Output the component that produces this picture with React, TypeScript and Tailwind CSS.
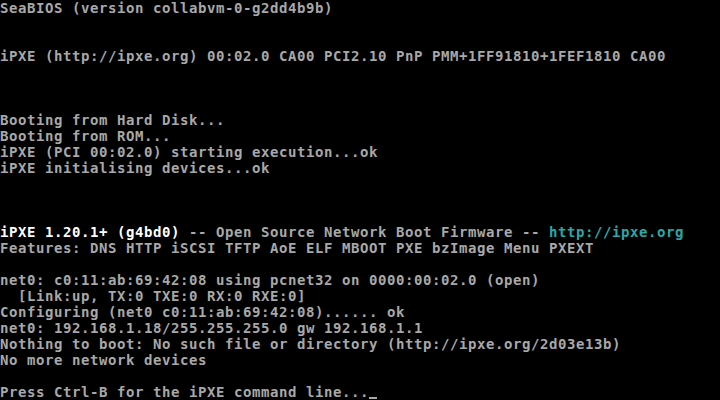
import React from "react";

type Seg = { t: string; c?: "w" | "c" };
const G = (t: string): Seg[] => [{ t }];

const rows: Seg[][] = [
  G("SeaBIOS (version collabvm-0-g2dd4b9b)"),
  G(""),
  G(""),
  G("iPXE (http://ipxe.org) 00:02.0 CA00 PCI2.10 PnP PMM+1FF91810+1FEF1810 CA00"),
  G(""),
  G(""),
  G(""),
  G("Booting from Hard Disk..."),
  G("Booting from ROM..."),
  G("iPXE (PCI 00:02.0) starting execution...ok"),
  G("iPXE initialising devices...ok"),
  G(""),
  G(""),
  G(""),
  [
    { t: "iPXE 1.20.1+ (g4bd0)", c: "w" },
    { t: " -- Open Source Network Boot Firmware -- " },
    { t: "http://ipxe.org", c: "c" },
  ],
  G("Features: DNS HTTP iSCSI TFTP AoE ELF MBOOT PXE bzImage Menu PXEXT"),
  G(""),
  G("net0: c0:11:ab:69:42:08 using pcnet32 on 0000:00:02.0 (open)"),
  G("  [Link:up, TX:0 TXE:0 RX:0 RXE:0]"),
  G("Configuring (net0 c0:11:ab:69:42:08)...... ok"),
  G("net0: 192.168.1.18/255.255.255.0 gw 192.168.1.1"),
  G("Nothing to boot: No such file or directory (http://ipxe.org/2d03e13b)"),
  G("No more network devices"),
  G(""),
  G("Press Ctrl-B for the iPXE command line..."),
];

export default function App() {
  return (
    <div
      className="w-[720px] h-[400px] bg-black overflow-hidden text-[#a8a8a8] text-[14px] leading-[16px] tracking-[0.57px]"
      style={{ fontFamily: '"DejaVu Sans Mono", monospace' }}
    >
      {rows.map((r, i) => (
        <div key={i} className="h-[16px] whitespace-pre flex">
          {r.map((s, j) => (
            <span
              key={j}
              className={
                s.c === "w"
                  ? "text-white font-bold"
                  : s.c === "c"
                  ? "text-[#2aa8a8] font-bold"
                  : "font-bold"
              }
            >
              {s.t}
            </span>
          ))}
          {i === rows.length - 1 && (
            <span className="w-[9px] h-[16px] flex flex-col justify-end">
              <span className="block w-[8px] h-[2px] bg-[#a8a8a8] mb-[1px]" />
            </span>
          )}
        </div>
      ))}
    </div>
  );
}
